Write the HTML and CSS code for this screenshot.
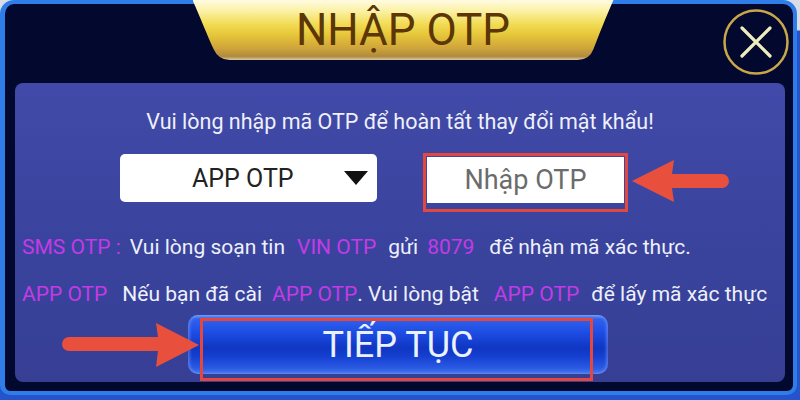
FILE: index.html
```html
<!DOCTYPE html>
<html lang="vi">
<head>
<meta charset="utf-8">
<title>Nhập OTP</title>
<link rel="stylesheet" href="styles.css">
</head>
<body>
<div class="screen">
  <div class="frame">
    <div class="header">
      <div class="tab"><span>NHẬP OTP</span></div>
      <button class="close" aria-label="Đóng">
        <svg viewBox="0 0 66 66" width="66" height="66">
          <circle cx="33" cy="33" r="31.5" fill="none" stroke="#c9a64a" stroke-width="2.5"/>
          <path d="M19 19 L47 47 M47 19 L19 47" stroke="#efecbd" stroke-width="3.2" stroke-linecap="round"/>
        </svg>
      </button>
    </div>
    <div class="panel">
      <p class="intro">Vui lòng nhập mã OTP để hoàn tất thay đổi mật khẩu!</p>
      <div class="otp-row">
        <div class="select"><span>APP OTP</span><i class="caret"></i></div>
        <div class="otp-box"><div class="otp-input">Nhập OTP</div></div>
        <svg class="arrow-left" viewBox="0 0 100 44" width="100" height="44">
          <path d="M2 22 L44 1 L42 15 L92 15 A7 7 0 0 1 92 29 L42 29 L44 43 Z" fill="#e8503d"/>
        </svg>
      </div>
      <p class="note"><span class="hl">SMS OTP :</span><span class="gap-xs">Vui lòng soạn tin</span><span class="hl gap-s">VIN OTP</span><span class="gap-s">gửi</span><span class="hl gap-xs">8079</span><span class="gap-m">để nhận mã xác thực.</span></p>
      <p class="note"><span class="hl">APP OTP</span><span class="gap-m">Nếu bạn đã cài</span><span class="hl gap-t">APP OTP</span><span>. Vui lòng bật</span><span class="hl gap-m">APP OTP</span><span class="gap-s">để lấy mã xác thực</span></p>
      <div class="submit-row">
        <div class="submit-wrap">
          <button class="submit">TIẾP TỤC</button>
          <div class="mark"></div>
          <svg class="arrow-right" viewBox="0 0 138 46" width="138" height="46">
            <path d="M137 23 L94 1 L96 15 L7 15 A7 7 0 0 0 7 29 L96 29 L94 45 Z" fill="#e8503d"/>
          </svg>
        </div>
      </div>
    </div>
  </div>
</div>
</body>
</html>
```
FILE: styles.css
```css
* { box-sizing: border-box; }

body {
  margin: 0;
  background: #2453cc;
  font-family: Roboto, "Noto Sans", sans-serif;
}

.screen {
  width: 800px;
  height: 400px;
  overflow: hidden;
  background: linear-gradient(180deg, #d9dde8 0, #d9dde8 30px, #2453cc 31px);
}

.frame {
  width: 797px;
  height: 395px;
  border: 4px solid #2f7de9;
  border-left-width: 5px;
  border-radius: 14px 14px 10px 10px;
  background: #03082f;
  display: flex;
  flex-direction: column;
}

.header {
  display: grid;
  grid-template-columns: 1fr 421px 1fr;
  height: 83px;
  margin-top: -4px;
  padding-left: 8px;
}

.tab {
  grid-column: 2;
  height: 60px;
  clip-path: path('M0 0 L421 0 C413 18 406 36 401 49 Q397 60 385 60 L37 60 Q26 60 21 49 C15 36 8 18 0 0 Z');
  background: linear-gradient(180deg, #fffbe2 0%, #fbf1a6 18%, #f2dc55 40%, #e6c63a 58%, #cfa53a 80%, #b08a3e 94%, #d8c8a0 100%);
  text-align: center;
  font-size: 44px;
  line-height: 60px;
  color: #5b3606;
}

.close {
  grid-column: 3;
  justify-self: end;
  align-self: start;
  margin: 9px 4px 0 0;
  width: 66px;
  height: 66px;
  padding: 0;
  border: 0;
  background: none;
}

.close svg { display: block; }

.panel {
  flex: 1;
  margin: 0 8px 9px 10px;
  border-radius: 8px;
  background: linear-gradient(180deg, #414aa8 0%, #3a449e 50%, #363f94 100%);
  color: #eef0fa;
}

.intro {
  margin: 27px 0 0;
  text-align: center;
  font-size: 21.5px;
  line-height: 24px;
}

.otp-row {
  display: flex;
  align-items: flex-start;
  margin-top: 19px;
  padding-left: 105px;
}

.select {
  width: 257px;
  height: 48px;
  margin-top: 1px;
  background: #fff;
  border-radius: 5px;
  display: flex;
  align-items: center;
  padding: 0 9px 0 72px;
}

.select span {
  font-size: 25px;
  color: #222;
}

.caret {
  margin-left: auto;
  width: 0;
  height: 0;
  border-left: 12.5px solid transparent;
  border-right: 12.5px solid transparent;
  border-top: 14px solid #111;
}

.otp-box {
  margin-left: 46px;
  border: 3px solid #e2483e;
  padding: 1px 1px 6px;
}

.otp-input {
  width: 197px;
  height: 46px;
  background: #fff;
  display: flex;
  align-items: center;
  justify-content: center;
  font-size: 27px;
  color: #6b6b6b;
}

.arrow-left {
  display: block;
  margin: 6px 0 0 2px;
}

.note {
  margin: 23px 0 0;
  padding-left: 7px;
  font-size: 21px;
  line-height: 24px;
  white-space: nowrap;
  display: flex;
}

.hl { color: #c43ae6; }
.gap-xs { margin-left: 9px; }
.gap-t { margin-left: 10px; }
.gap-s { margin-left: 12px; }
.gap-m { margin-left: 15px; }

.submit-row {
  margin-top: 9px;
  padding-left: 173px;
}

.submit-wrap {
  position: relative;
  width: 420px;
  height: 59px;
}

.submit {
  display: flex;
  align-items: center;
  justify-content: center;
  width: 420px;
  height: 59px;
  border: 0;
  border-radius: 10px;
  padding: 0;
  background: linear-gradient(180deg, #6b92f4 0%, #2f61ee 7%, #1c4ae2 32%, #1036c2 56%, #153fd0 70%, #2a5ae4 90%, #4a77ec 100%);
  box-shadow: inset 2px 0 3px rgba(140, 170, 255, .45), inset -2px 0 3px rgba(140, 170, 255, .45);
  color: #eaf1ff;
  font-family: inherit;
  font-size: 36px;
}

.mark {
  position: absolute;
  left: 12px;
  top: 3px;
  width: 393px;
  height: 63px;
  border: 3px solid #e5473d;
}

.arrow-right {
  position: absolute;
  left: -126px;
  top: 7px;
}
```
